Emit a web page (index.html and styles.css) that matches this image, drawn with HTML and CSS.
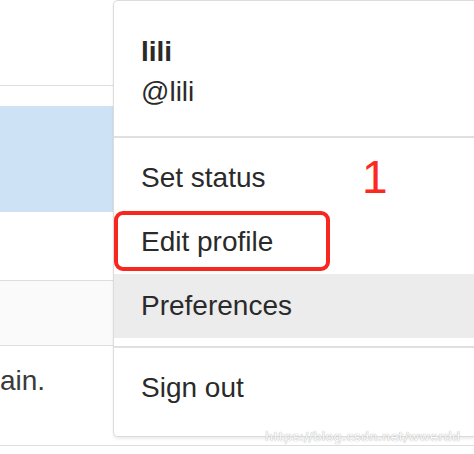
FILE: index.html
```html
<!DOCTYPE html>
<html>
<head>
<meta charset="utf-8">
<link rel="stylesheet" href="styles.css">
</head>
<body>
<div class="page">
  <div class="band band-top"></div>
  <div class="band band-gap"></div>
  <div class="band band-blue"></div>
  <div class="band band-white"></div>
  <div class="band band-gray"></div>
  <div class="band band-text"><span class="tail">ain.</span></div>
  <div class="band band-foot"></div>
</div>

<div class="dropdown">
  <div class="user">
    <div class="name">lili</div>
    <div class="handle">@lili</div>
  </div>
  <ul class="menu">
    <li class="item">Set status</li>
    <li class="item">Edit profile</li>
    <li class="item hover">Preferences</li>
  </ul>
  <ul class="menu last">
    <li class="item">Sign out</li>
  </ul>
</div>

<div class="mark-box"></div>
<div class="mark-num">1</div>
<div class="watermark">https://blog.csdn.net/wwerdd</div>
</body>
</html>
```

FILE: styles.css
```css
html, body {
  margin: 0;
  padding: 0;
  overflow: hidden;
  background: #fff;
  font-family: "Liberation Sans", Arial, sans-serif;
  color: #2e2e2e;
}

.page {
  width: 474px;
  height: 454px;
  display: flex;
  flex-direction: column;
}

.band { flex: none; }
.band-top { height: 85px; border-bottom: 1px solid #dedede; }
.band-gap { height: 20px; }
.band-blue { height: 106px; background: #cde2f5; }
.band-white { height: 68px; border-bottom: 1px solid #dedede; }
.band-gray { height: 64px; background: #fafafa; border-bottom: 1px solid #dedede; }
.band-text {
  height: 100px;
  border-bottom: 1px solid #dedede;
  font-size: 28px;
  line-height: 28px;
  box-sizing: border-box;
  display: flex;
  align-items: flex-start;
}
.tail { margin-top: 21px; color: #3a3a3a; }
.band-foot { height: 6px; }

.dropdown {
  position: absolute;
  left: 113px;
  top: 0;
  width: 361px;
  box-sizing: border-box;
  background: #fff;
  border: 1.5px solid #dcdcdc;
  border-right: none;
  border-radius: 5px 0 0 5px;
  box-shadow: 0 2px 3px rgba(0,0,0,0.08);
  font-size: 28px;
  color: #2a2a2a;
}

.user {
  padding: 31px 0 24px 27px;
  border-bottom: 2px solid #e0e0e0;
  line-height: 40px;
}
.name { font-weight: bold; }

.menu {
  list-style: none;
  margin: 0;
  padding: 8px 0;
  border-bottom: 2px solid #e0e0e0;
}
.menu.last { border-bottom: none; padding-bottom: 16px; }

.item {
  height: 64px;
  line-height: 64px;
  padding-left: 27px;
}
.item.hover { background: #ececec; }

.mark-box {
  position: absolute;
  left: 114px;
  top: 211px;
  width: 216px;
  height: 60px;
  box-sizing: border-box;
  border: 4.5px solid #f7261e;
  border-radius: 9px;
}

.mark-num {
  position: absolute;
  left: 362px;
  top: 150px;
  font-family: "Liberation Sans", Arial, sans-serif;
  font-size: 46px;
  line-height: 54px;
  color: #fb2a20;
}

.watermark {
  position: absolute;
  left: 265px;
  top: 429px;
  font-family: "DejaVu Sans", sans-serif;
  font-size: 13px;
  color: rgba(255,255,255,0.95);
  text-shadow: 0 0 1px #bbb, 0 0 1px #bbb;
  letter-spacing: 0.2px;
}
```
